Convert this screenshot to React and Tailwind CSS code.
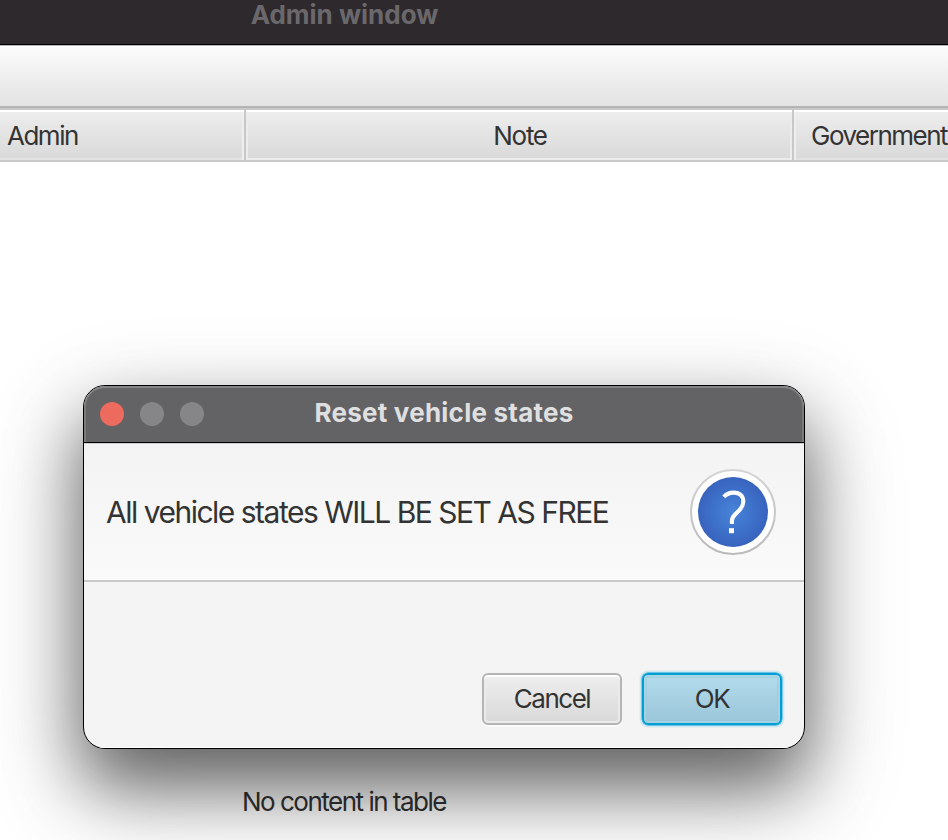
function HeaderCell({ className, children }) {
  return (
    <div
      className={`flex h-[50px] items-center whitespace-nowrap bg-linear-to-b from-[#eeeeee] to-[#d9d9d9] text-[26px] text-[#333333] ${className}`}
    >
      {children}
    </div>
  );
}

function QuestionIcon() {
  return (
    <svg width="86" height="86" viewBox="0 0 86 86" className="shrink-0">
      <defs>
        <linearGradient id="ring" x1="0" y1="0" x2="0" y2="1">
          <stop offset="0" stopColor="#d4d4d4" />
          <stop offset="1" stopColor="#bababa" />
        </linearGradient>
        <radialGradient id="disc">
          <stop offset="0" stopColor="#4685d9" />
          <stop offset="1" stopColor="#3863be" />
        </radialGradient>
      </defs>
      <circle cx="43" cy="43" r="42" fill="#ffffff" stroke="url(#ring)" strokeWidth="2" />
      <circle cx="43" cy="43" r="35" fill="url(#disc)" />
      <path
        d="M33.8 27.8C36.3 25 39.8 23.6 43.8 23.6C49.8 23.6 53.3 27.2 53.3 32.4C53.3 36.3 51.3 39.4 47.8 42.8C43.8 46.6 41.9 48.4 41.9 52V55"
        fill="none"
        stroke="#ffffff"
        strokeWidth="4.1"
      />
      <rect x="39" y="59.2" width="5" height="5" fill="#ffffff" />
    </svg>
  );
}

function Dialog() {
  return (
    <div className="absolute top-[385px] left-[83px] flex h-[364px] w-[722px] flex-col overflow-hidden rounded-[22px] border border-black bg-[#f4f4f4] shadow-[0_36px_68px_rgba(0,0,0,0.5),0_36px_100px_rgba(0,0,0,0.25)]">
      <div className="relative flex h-[57px] shrink-0 items-center justify-center rounded-t-[21px] border-b border-black bg-[#636365] pb-[3px] shadow-[inset_0_2px_0_#858586,inset_2px_0_0_#7b7b7c,inset_-2px_0_0_#7b7b7c]">
        <div className="absolute top-4 left-4 flex gap-4">
          <span className="size-6 rounded-full bg-[#ed6a5e]" />
          <span className="size-6 rounded-full bg-[#868688]" />
          <span className="size-6 rounded-full bg-[#868688]" />
        </div>
        <h1 className="text-[26px] font-bold tracking-[0.23px] whitespace-nowrap text-[#dfdfe0]">
          Reset vehicle states
        </h1>
      </div>
      <div className="flex h-[139px] shrink-0 items-center justify-between border-b-2 border-[#c8c8c8] bg-linear-to-b from-[#f3f3f3] to-[#fafafa] pr-7 pl-[22px] shadow-[inset_0_1px_0_#cfcfcf]">
        <p className="pt-[2px] text-[30px] tracking-[-1.5px] whitespace-nowrap text-[#333333]">
          All vehicle states WILL BE SET AS FREE
        </p>
        <QuestionIcon />
      </div>
      <div className="flex flex-1 items-end justify-end gap-5 pr-[22px] pb-[23px] shadow-[inset_0_-1px_0_#ffffff]">
        <button className="h-[52px] w-[140px] rounded-[6px] border-2 border-[#b5b5b5] bg-linear-to-b from-[#eeeeee] to-[#d9d9d9] pb-[2px] text-[26px] tracking-[-1.5px] text-[#333333] shadow-[inset_0_2px_0_#fdfdfd,inset_0_0_0_2px_#ebebeb,0_2px_0_#fbfbfb]">
          Cancel
        </button>
        <button className="h-[52px] w-[140px] rounded-[6px] border-2 border-[#039ed3] bg-linear-to-b from-[#b3dced] to-[#9bc5d9] pb-[2px] text-[26px] tracking-[-1.4px] text-[#333333] shadow-[inset_0_0_0_2px_rgba(178,225,238,0.45),inset_0_0_0_3px_rgba(150,198,216,0.6),0_0_0_0.4px_#039ed3,0_0_0_2.4px_#d2e8f0]">
          OK
        </button>
      </div>
    </div>
  );
}

export default function App() {
  return (
    <main className="relative flex h-[840px] w-[948px] flex-col overflow-hidden bg-white font-['Inter','Liberation_Sans',sans-serif]">
      <header className="flex h-[45px] shrink-0 border-b border-black bg-[#2d292d]">
        <div className="flex h-[29px] w-[689px] items-center justify-center text-[26px] font-bold text-[#6b686c]">
          Admin window
        </div>
      </header>
      <div className="h-[63px] shrink-0 border-t border-b-2 border-t-[#b9b9b9] border-b-[#b3b3b3] bg-linear-to-b from-[#fcfcfc] to-[#e3e3e3]" />
      <div className="flex h-[54px] shrink-0 gap-[2px] border-y-2 border-[#c8c8c8] bg-[#c8c8c8] tracking-[-1.5px]">
        <HeaderCell className="w-[244px] pl-[7px] shadow-[inset_0_2px_0_#ffffff,inset_-2px_0_0_#efefef,inset_0_-2px_0_#e2e2e2]">
          Admin
        </HeaderCell>
        <HeaderCell className="w-[546px] justify-center pl-[2px] tracking-[-1.3px] shadow-[inset_0_2px_0_#ffffff,inset_0_0_0_2px_#ececec]">
          Note
        </HeaderCell>
        <HeaderCell className="w-[154px] pl-[17px] shadow-[inset_0_2px_0_#ffffff,inset_2px_0_0_#efefef,inset_0_-2px_0_#e2e2e2]">
          Government
        </HeaderCell>
      </div>
      <section className="flex flex-1 items-end pb-[22px]">
        <p className="w-[688px] text-center text-[26px] leading-8 tracking-[-1.5px] text-[#333333]">
          No content in table
        </p>
      </section>
      <Dialog />
    </main>
  );
}
